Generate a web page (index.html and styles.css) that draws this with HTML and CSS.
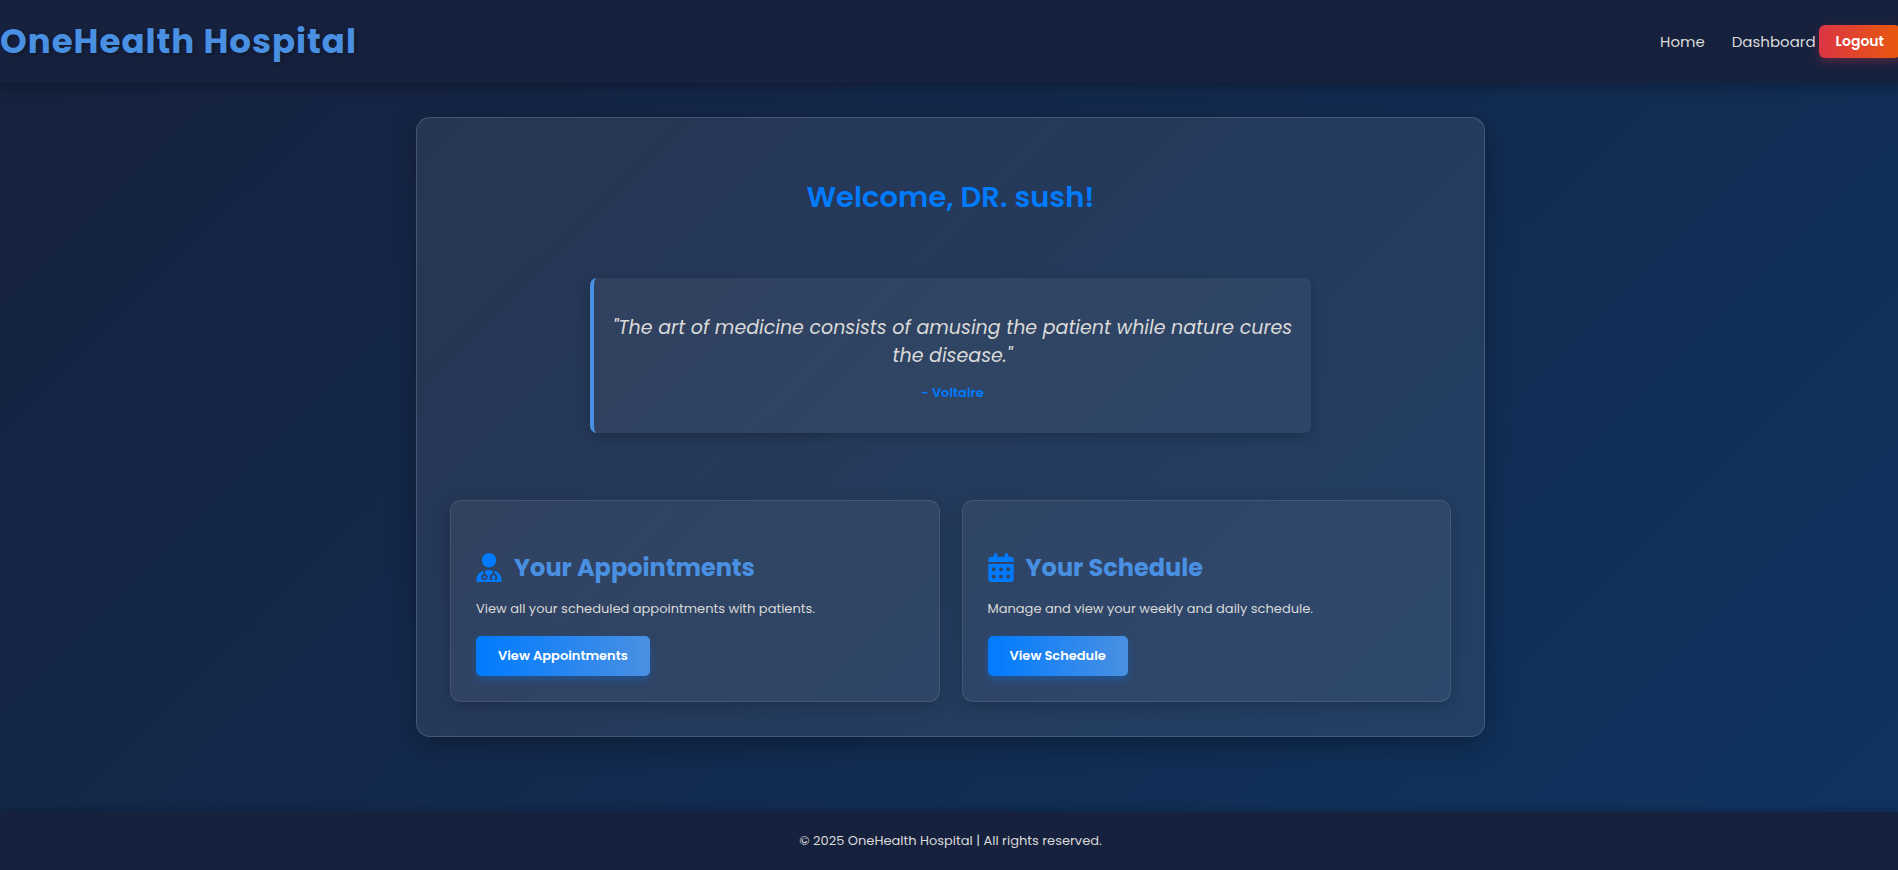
FILE: index.html
```html
<!DOCTYPE html>
<html lang="en">
<head>
<meta charset="utf-8">
<meta name="viewport" content="width=device-width, initial-scale=1">
<title>OneHealth Hospital</title>
<link rel="stylesheet" href="styles.css">
</head>
<body>
<div class="page">
  <header class="site-header">
    <div class="brand">OneHealth Hospital</div>
    <nav class="nav">
      <a class="nav-link" href="#home">Home</a>
      <a class="nav-link" href="#dashboard">Dashboard</a>
      <button class="logout" type="button">Logout</button>
    </nav>
  </header>
  <main class="panel">
    <h1 class="welcome">Welcome, DR. sush!</h1>
    <blockquote class="quote">
      <p class="quote-text">"The art of medicine consists of amusing the patient while nature cures the disease."</p>
      <footer class="quote-author">- Voltaire</footer>
    </blockquote>
    <div class="cards">
      <section class="card">
        <h2 class="card-title">
          <svg class="icon" viewBox="0 0 448 512" aria-hidden="true"><path d="M224 256A128 128 0 1 0 224 0a128 128 0 1 0 0 256zm-96 55.2C54 332.9 0 401.3 0 482.3C0 498.7 13.3 512 29.7 512H418.3c16.4 0 29.7-13.3 29.7-29.7c0-81-54-149.4-128-171.1V362c27.6 7.1 48 32.2 48 62v40c0 8.8-7.2 16-16 16H336c-8.8 0-16-7.2-16-16s7.2-16 16-16V424c0-17.7-14.3-32-32-32s-32 14.3-32 32v24c8.8 0 16 7.2 16 16s-7.2 16-16 16H256c-8.8 0-16-7.2-16-16V424c0-29.8 20.4-54.9 48-62V304.9c-6-.6-12.1-.9-18.3-.9H178.3c-6.2 0-12.3 .3-18.3 .9v65.4c23.1 6.9 40 28.3 40 53.7c0 30.9-25.1 56-56 56s-56-25.1-56-56c0-25.4 16.9-46.8 40-53.7V311.2zM144 448a24 24 0 1 0 0-48 24 24 0 1 0 0 48z"/></svg>
          <span>Your Appointments</span>
        </h2>
        <p class="card-text">View all your scheduled appointments with patients.</p>
        <button class="action" type="button">View Appointments</button>
      </section>
      <section class="card">
        <h2 class="card-title">
          <svg class="icon" viewBox="0 0 448 512" aria-hidden="true"><path d="M128 0c17.7 0 32 14.3 32 32V64H288V32c0-17.7 14.3-32 32-32s32 14.3 32 32V64h48c26.5 0 48 21.5 48 48v48H0V112C0 85.5 21.5 64 48 64H96V32c0-17.7 14.3-32 32-32zM0 192H448V464c0 26.5-21.5 48-48 48H48c-26.5 0-48-21.5-48-48V192zm64 80v32c0 8.8 7.2 16 16 16h32c8.8 0 16-7.2 16-16V272c0-8.8-7.2-16-16-16H80c-8.8 0-16 7.2-16 16zm128 0v32c0 8.8 7.2 16 16 16h32c8.8 0 16-7.2 16-16V272c0-8.8-7.2-16-16-16H208c-8.8 0-16 7.2-16 16zm144-16c-8.8 0-16 7.2-16 16v32c0 8.8 7.2 16 16 16h32c8.8 0 16-7.2 16-16V272c0-8.8-7.2-16-16-16H336zM64 400v32c0 8.8 7.2 16 16 16h32c8.8 0 16-7.2 16-16V400c0-8.8-7.2-16-16-16H80c-8.8 0-16 7.2-16 16zm144-16c-8.8 0-16 7.2-16 16v32c0 8.8 7.2 16 16 16h32c8.8 0 16-7.2 16-16V400c0-8.8-7.2-16-16-16H208zm112 16v32c0 8.8 7.2 16 16 16h32c8.8 0 16-7.2 16-16V400c0-8.8-7.2-16-16-16H336c-8.8 0-16 7.2-16 16z"/></svg>
          <span>Your Schedule</span>
        </h2>
        <p class="card-text">Manage and view your weekly and daily schedule.</p>
        <button class="action" type="button">View Schedule</button>
      </section>
    </div>
  </main>
  <footer class="site-footer">© 2025 OneHealth Hospital | All rights reserved.</footer>
</div>
</body>
</html>
```
FILE: styles.css
```css
* {
  box-sizing: border-box;
}

html {
  overflow-x: hidden;
}

body {
  margin: 0 -3px 0 0;
  background: #16213e;
  color: #dadada;
  font-family: Poppins, Inter, sans-serif;
  font-size: 13px;
}

h1, h2, p {
  margin: 0;
}

button {
  border: 0;
  color: #fff;
  font: inherit;
  font-weight: 600;
  cursor: pointer;
}

.page {
  display: flex;
  flex-direction: column;
  min-height: 100vh;
  background: linear-gradient(135deg, #16213e, #0f3460);
}

.site-header {
  display: flex;
  align-items: center;
  justify-content: space-between;
  padding: 18px 0;
  background: #16213e;
  box-shadow: 0 4px 14px rgba(0, 0, 0, 0.3);
}

.brand {
  color: #4a90e2;
  font-size: 34px;
  font-weight: 700;
  line-height: 47px;
  letter-spacing: 1px;
  text-shadow: 2px 2px 4px rgba(0, 0, 0, 0.3);
}

.nav {
  display: flex;
  align-items: center;
  gap: 3px;
}

.nav-link {
  color: #dadada;
  font-size: 15px;
  text-decoration: none;
}

.nav-link:first-child {
  margin-right: 24px;
}

.logout {
  padding: 0 17px;
  border-radius: 6px;
  background: linear-gradient(90deg, #dc3545, #e8590c);
  box-shadow: 0 4px 10px rgba(220, 53, 69, 0.3);
  font-size: 14px;
  line-height: 33px;
}

.panel {
  width: 1069px;
  max-width: calc(100% - 40px);
  margin: 34px auto 75px;
  padding: 58px 33px 34px;
  border: 1px solid rgba(255, 255, 255, 0.15);
  border-radius: 14px;
  background: rgba(255, 255, 255, 0.08);
  box-shadow: 0 8px 28px rgba(0, 0, 0, 0.3);
}

.welcome {
  color: #007bff;
  font-size: 29px;
  font-weight: 600;
  line-height: 42px;
  text-align: center;
}

.quote {
  max-width: 721px;
  margin: 60px auto 67px;
  padding: 36px 16px 30px;
  border-left: 4px solid #4a90e2;
  border-radius: 7px;
  background: rgba(255, 255, 255, 0.05);
  box-shadow: 0 4px 14px rgba(0, 0, 0, 0.2);
  text-align: center;
}

.quote-text {
  font-size: 19px;
  font-style: italic;
  line-height: 28px;
}

.quote-author {
  margin-top: 12px;
  color: #007bff;
  font-weight: 600;
  line-height: 21px;
}

.cards {
  display: grid;
  grid-template-columns: repeat(auto-fit, minmax(300px, 1fr));
  gap: 22px;
}

.card {
  padding: 49px 25px 25px;
  border: 1px solid rgba(255, 255, 255, 0.1);
  border-radius: 11px;
  background: rgba(255, 255, 255, 0.05);
  box-shadow: 0 4px 18px rgba(0, 0, 0, 0.2);
}

.card-title {
  display: flex;
  align-items: center;
  gap: 12px;
  color: #4a90e2;
  font-size: 24px;
  font-weight: 700;
  line-height: 36px;
}

.icon {
  width: 26px;
  height: 29px;
  margin-bottom: 2px;
  fill: #007bff;
}

.card-text {
  margin: 12px 0 16px;
  line-height: 22px;
}

.action {
  padding: 0 22px;
  border-radius: 5px;
  background: linear-gradient(90deg, #007bff, #4a90e2);
  box-shadow: 0 4px 9px rgba(0, 123, 255, 0.3);
  line-height: 40px;
}

.site-footer {
  margin-top: auto;
  padding: 18px;
  border-bottom: 1px solid #444248;
  background: #16213e;
  box-shadow: 0 -2px 9px rgba(0, 0, 0, 0.2);
  line-height: 22px;
  text-align: center;
}
```
